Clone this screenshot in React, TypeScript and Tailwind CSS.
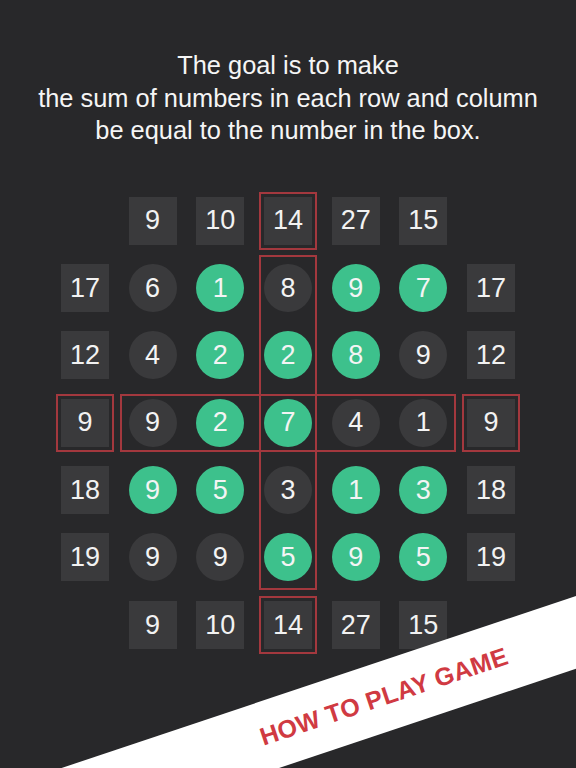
const top = [9, 10, 14, 27, 15];

const rows = [
  { sum: 17, cells: [6, 1, 8, 9, 7], on: [false, true, false, true, true] },
  { sum: 12, cells: [4, 2, 2, 8, 9], on: [false, true, true, true, false] },
  { sum: 9, cells: [9, 2, 7, 4, 1], on: [false, true, true, false, false] },
  { sum: 18, cells: [9, 5, 3, 1, 3], on: [true, true, false, true, true] },
  { sum: 19, cells: [9, 9, 5, 9, 5], on: [false, false, true, true, true] },
];

const colStart = ["col-start-1", "col-start-2", "col-start-3", "col-start-4", "col-start-5", "col-start-6", "col-start-7"];
const rowStart = ["row-start-1", "row-start-2", "row-start-3", "row-start-4", "row-start-5", "row-start-6", "row-start-7"];

const font = { fontFamily: '"Liberation Sans", Arial, sans-serif' };

function Square({ n, marked, at }: { n: number; marked?: boolean; at: string }) {
  return (
    <div
      className={
        at +
        " flex h-12 w-12 items-center justify-center bg-[#3a3a3c] text-[27px] text-[#f2f2f2] " +
        (marked ? "outline-2 outline-offset-[3px] outline-[#a3383e] outline-solid" : "")
      }
    >
      {n}
    </div>
  );
}

function Dot({ n, on, at }: { n: number; on: boolean; at: string }) {
  return (
    <div
      className={
        at +
        " relative z-10 flex h-12 w-12 items-center justify-center rounded-full text-[27px] text-[#f4f4f4] " +
        (on ? "bg-[#3dc18c]" : "bg-[#3a3a3c]")
      }
    >
      {n}
    </div>
  );
}

export default function App() {
  return (
    <div className="relative h-[768px] w-[576px] overflow-hidden bg-[#28282a]" style={font}>
      <p className="pt-[49px] text-center text-[25.4px] leading-[32.5px] text-[#f5f5f5]">
        The goal is to make
        <br />
        the sum of numbers in each row and column
        <br />
        be equal to the number in the box.
      </p>

      <div className="mt-[50px] grid grid-cols-[repeat(7,48px)] grid-rows-[repeat(7,48px)] justify-center gap-x-[19.7px] gap-y-[19.4px]">
        {top.map((n, i) => (
          <Square key={"t" + i} n={n} marked={i === 2} at={"row-start-1 " + colStart[i + 1]} />
        ))}

        {rows.map((r, ri) => (
          <div key={ri} className="contents">
            <Square n={r.sum} marked={ri === 2} at={rowStart[ri + 1] + " col-start-1"} />
            {r.cells.map((n, ci) => (
              <Dot key={ci} n={n} on={r.on[ci]} at={rowStart[ri + 1] + " " + colStart[ci + 1]} />
            ))}
            <Square n={r.sum} marked={ri === 2} at={rowStart[ri + 1] + " col-start-7"} />
          </div>
        ))}

        {top.map((n, i) => (
          <Square key={"b" + i} n={n} marked={i === 2} at={"row-start-7 " + colStart[i + 1]} />
        ))}

        <div className="col-start-4 row-start-2 row-span-5 -mx-[5px] -my-[9px] border-2 border-[#a3383e]" />
        <div className="col-start-2 col-span-5 row-start-4 -mx-[9px] -my-[5px] border-2 border-[#a3383e]" />
      </div>

      <div className="absolute left-[-16px] top-[662px] z-20 flex h-[69px] w-[800px] rotate-[-18.5deg] items-center justify-center bg-white">
        <span className="text-[25px] font-bold tracking-[0.3px] text-[#d03a42]">HOW TO PLAY GAME</span>
      </div>
    </div>
  );
}
